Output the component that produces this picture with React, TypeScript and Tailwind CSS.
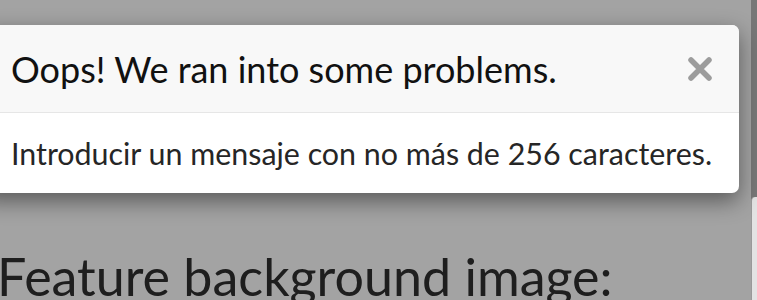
export default function App() {
  return (
    <div className="relative h-[300px] w-[757px] overflow-hidden bg-white font-['Lato',sans-serif] text-[#303030]">
      {/* page under the overlay */}
      <div className="pr-[6px]">
        <p className="mt-[17px] pl-[19px] text-[42px] leading-[48px]">required</p>
        <h2 className="mt-[181px] -ml-[3px] text-[52px] leading-[60px]">Feature background image:</h2>
      </div>

      {/* backdrop */}
      <div className="absolute inset-0 bg-[rgba(0,0,0,0.36)]" />

      {/* right rail */}
      <div className="absolute right-0 top-0 flex h-full w-[6px] flex-col bg-[#777777]">
        <div className="mt-[197px] flex-1 rounded-tl-[4px] border-l border-[#999999] bg-[#e3e3e3]" />
      </div>

      {/* dialog */}
      <div className="absolute left-[-20px] top-[25px] w-[759px] overflow-hidden rounded-[7px] bg-white shadow-[0_8px_22px_rgba(0,0,0,0.45)]">
        <div className="flex h-[88px] items-center justify-between border-b border-[#e6e6e6] bg-[#f8f8f8] pl-[31px] pr-[24px]">
          <h1 className="text-[36px] leading-none text-[#111111]">Oops! We ran into some problems.</h1>
          <button className="flex h-[30px] w-[30px] items-center justify-center">
            <svg width="26" height="26" viewBox="0 0 26 26">
              <path d="M4 4 L22 22 M22 4 L4 22" stroke="#9c9c9c" strokeWidth="5.5" strokeLinecap="round" />
            </svg>
          </button>
        </div>
        <div className="flex h-[80px] items-center pl-[31px]">
          <p className="text-[30.4px] leading-none text-[#262626]">Introducir un mensaje con no más de 256 caracteres.</p>
        </div>
      </div>
    </div>
  );
}
